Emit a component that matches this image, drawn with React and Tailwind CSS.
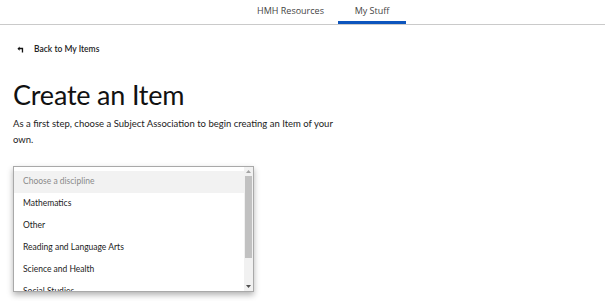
import { useState } from 'react'

const options = [
  'Mathematics',
  'Other',
  'Reading and Language Arts',
  'Science and Health',
  'Social Studies',
]

export default function App() {
  const [tab] = useState('mystuff')

  return (
    <div className="min-h-screen bg-white text-[#1b1b1b]" style={{ fontFamily: 'Lato, "Noto Sans", sans-serif' }}>
      <header className="h-[25px] border-b-[1.5px] border-[#cacaca] flex">
        <nav className="ml-[243px] flex h-full" style={{ fontFamily: '"Open Sans", sans-serif' }}>
          <a className="w-[95px] h-full flex justify-center items-start pt-[4px] text-[9px] text-[#444]">HMH Resources</a>
          <a className={`w-[68px] h-full flex justify-center items-start pt-[4px] text-[9px] text-[#444] ${tab === 'mystuff' ? 'border-b-[3px] border-[#0d55bd]' : ''}`}>My Stuff</a>
        </nav>
      </header>

      <div className="pl-[13px]">
        <a className="mt-[18px] flex items-center gap-[10px] pl-[4px] text-[8.5px] font-semibold text-[#222]">
          <svg width="7" height="7" viewBox="0 0 8 8" className="shrink-0">
            <path d="M0.5 3 L3 0.5 L3 2 L7 2 L7 7.5 L5.5 7.5 L5.5 3.8 L3 3.8 L3 5.5 Z" fill="#111" />
          </svg>
          Back to My Items
        </a>

        <h1 className="mt-[24px] text-[27px] leading-[30px] tracking-[-0.2px] text-[#111]">
          Create an Item
        </h1>
        <p className="mt-[6px] w-[340px] text-[9.5px] leading-[16px] text-[#222]">
          As a first step, choose a Subject Association to begin creating an Item of your own.
        </p>

        <div className="mt-[18px] w-[241px] h-[126px] border border-[#a9a9a9] bg-white shadow-[0_3px_6px_rgba(0,0,0,0.3)] flex overflow-hidden">
          <ul className="flex-1 pt-[4px] overflow-hidden text-[8.5px]">
            <li className="h-[22px] flex items-center pl-[9px] bg-[#f2f2f2] text-[#8a8a8a]">Choose a discipline</li>
            {options.map(o => (
              <li key={o} className="h-[22px] flex items-center pl-[9px] text-[#1b1b1b]">{o}</li>
            ))}
          </ul>
          <div className="w-[9px] bg-[#f1f1f1] flex flex-col items-center">
            <div className="h-[9px] flex items-center justify-center">
              <svg width="5" height="3" viewBox="0 0 5 3"><path d="M0 3 L2.5 0 L5 3 Z" fill="#a3a3a3" /></svg>
            </div>
            <div className="w-[7px] h-[82px] bg-[#c1c1c1]" />
            <div className="flex-1" />
            <div className="h-[9px] flex items-center justify-center">
              <svg width="5" height="3" viewBox="0 0 5 3"><path d="M0 0 L5 0 L2.5 3 Z" fill="#505050" /></svg>
            </div>
          </div>
        </div>
      </div>
    </div>
  )
}
